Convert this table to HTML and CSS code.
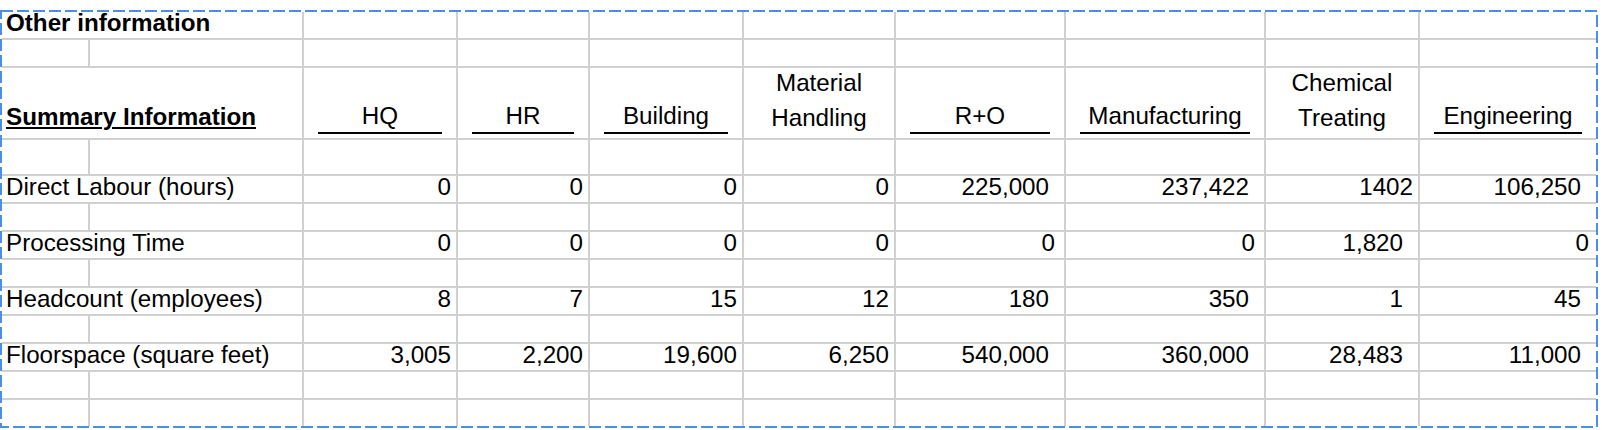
FILE: index.html
```html
<!DOCTYPE html>
<html>
<head>
<meta charset="utf-8">
<link rel="stylesheet" href="styles.css">
</head>
<body>
<div class="sheet">
  <div class="grid">
    <!-- row 1 -->
    <div class="c span2 b">Other information</div>
    <div class="c"></div><div class="c"></div><div class="c"></div><div class="c"></div><div class="c"></div><div class="c"></div><div class="c"></div><div class="c"></div>
    <!-- row 2 -->
    <div class="c"></div><div class="c"></div><div class="c"></div><div class="c"></div><div class="c"></div><div class="c"></div><div class="c"></div><div class="c"></div><div class="c"></div><div class="c"></div>
    <!-- row 3 headers -->
    <div class="c span2 b sum"><span class="u">Summary Information</span></div>
    <div class="c h"><div class="t">HQ</div><div class="bar"></div></div>
    <div class="c h"><div class="t">HR</div><div class="bar"></div></div>
    <div class="c h"><div class="t">Building</div><div class="bar"></div></div>
    <div class="c h w"><div class="t">Material<br>Handling</div><div class="bar"></div></div>
    <div class="c h"><div class="t">R+O</div><div class="bar"></div></div>
    <div class="c h"><div class="t">Manufacturing</div><div class="bar"></div></div>
    <div class="c h w"><div class="t">Chemical<br>Treating</div><div class="bar"></div></div>
    <div class="c h"><div class="t">Engineering</div><div class="bar"></div></div>
    <!-- row 4 -->
    <div class="c"></div><div class="c"></div><div class="c"></div><div class="c"></div><div class="c"></div><div class="c"></div><div class="c"></div><div class="c"></div><div class="c"></div><div class="c"></div>
    <!-- Direct Labour -->
    <div class="c span2">Direct Labour (hours)</div>
    <div class="c n">0</div>
    <div class="c n">0</div>
    <div class="c n">0</div>
    <div class="c n">0</div>
    <div class="c n a">225,000</div>
    <div class="c n a">237,422</div>
    <div class="c n">1402</div>
    <div class="c n a">106,250</div>
    <!-- blank -->
    <div class="c"></div><div class="c"></div><div class="c"></div><div class="c"></div><div class="c"></div><div class="c"></div><div class="c"></div><div class="c"></div><div class="c"></div><div class="c"></div>
    <!-- Processing Time -->
    <div class="c span2">Processing Time</div>
    <div class="c n">0</div>
    <div class="c n">0</div>
    <div class="c n">0</div>
    <div class="c n">0</div>
    <div class="c n m">0</div>
    <div class="c n m">0</div>
    <div class="c n a">1,820</div>
    <div class="c n e">0</div>
    <!-- blank -->
    <div class="c"></div><div class="c"></div><div class="c"></div><div class="c"></div><div class="c"></div><div class="c"></div><div class="c"></div><div class="c"></div><div class="c"></div><div class="c"></div>
    <!-- Headcount -->
    <div class="c span2">Headcount (employees)</div>
    <div class="c n">8</div>
    <div class="c n">7</div>
    <div class="c n">15</div>
    <div class="c n">12</div>
    <div class="c n a">180</div>
    <div class="c n a">350</div>
    <div class="c n a">1</div>
    <div class="c n a">45</div>
    <!-- blank -->
    <div class="c"></div><div class="c"></div><div class="c"></div><div class="c"></div><div class="c"></div><div class="c"></div><div class="c"></div><div class="c"></div><div class="c"></div><div class="c"></div>
    <!-- Floorspace -->
    <div class="c span2">Floorspace (square feet)</div>
    <div class="c n">3,005</div>
    <div class="c n">2,200</div>
    <div class="c n">19,600</div>
    <div class="c n">6,250</div>
    <div class="c n a">540,000</div>
    <div class="c n a">360,000</div>
    <div class="c n a">28,483</div>
    <div class="c n a">11,000</div>
    <!-- blank -->
    <div class="c"></div><div class="c"></div><div class="c"></div><div class="c"></div><div class="c"></div><div class="c"></div><div class="c"></div><div class="c"></div><div class="c"></div><div class="c"></div>
    <!-- blank -->
    <div class="c"></div><div class="c"></div><div class="c"></div><div class="c"></div><div class="c"></div><div class="c"></div><div class="c"></div><div class="c"></div><div class="c"></div><div class="c"></div>
  </div>
  <svg class="marquee" width="1598" height="418" viewBox="0 0 1598 418">
    <rect x="1" y="1" width="1596" height="416" fill="none" stroke="#4a8fe6" stroke-width="2" stroke-dasharray="12 4"/>
  </svg>
</div>
</body>
</html>
```
FILE: styles.css
```css
html, body {
  margin: 0;
  padding: 0;
  background: #ffffff;
}

body {
  font-family: "Liberation Sans", Arial, sans-serif;
  color: #000000;
}

.sheet {
  position: relative;
  margin-top: 10px;
  width: 1594px;
  padding: 2px;
}

.grid {
  display: grid;
  grid-template-columns: 86px 212px 152px 130px 152px 150px 168px 198px 152px 176px;
  grid-template-rows: 26px 26px 70px 34px repeat(9, 26px);
  gap: 2px;
  background: #d0d0d0;
}

.c {
  background: #ffffff;
  display: flex;
  align-items: flex-end;
  font-size: 24.2px;
  line-height: 24px;
  padding: 0 4px 3px 4px;
  white-space: nowrap;
  min-width: 0;
}

.span2 {
  grid-column: span 2;
}

.b {
  font-weight: bold;
}

.sum {
  padding-bottom: 9px;
}

.u {
  text-decoration: underline;
  text-decoration-thickness: 2px;
  text-underline-offset: 1.5px;
}

.n {
  justify-content: flex-end;
  padding-right: 5px;
}

.n.a {
  padding-right: 15px;
}

.n.m {
  padding-right: 9px;
}

.n.e {
  padding-right: 7px;
}

.h {
  flex-direction: column;
  align-items: stretch;
  justify-content: flex-end;
  padding: 0 0 4px 0;
  text-align: center;
}

.h .t {
  line-height: 34.7px;
  white-space: nowrap;
}

.h .bar {
  height: 2px;
  background: #000000;
  margin: -1.5px 14px 0 14px;
}

.h.w .bar {
  margin: -1.5px 4px 0 4px;
}

.marquee {
  position: absolute;
  left: 0;
  top: 0;
  pointer-events: none;
}
```
